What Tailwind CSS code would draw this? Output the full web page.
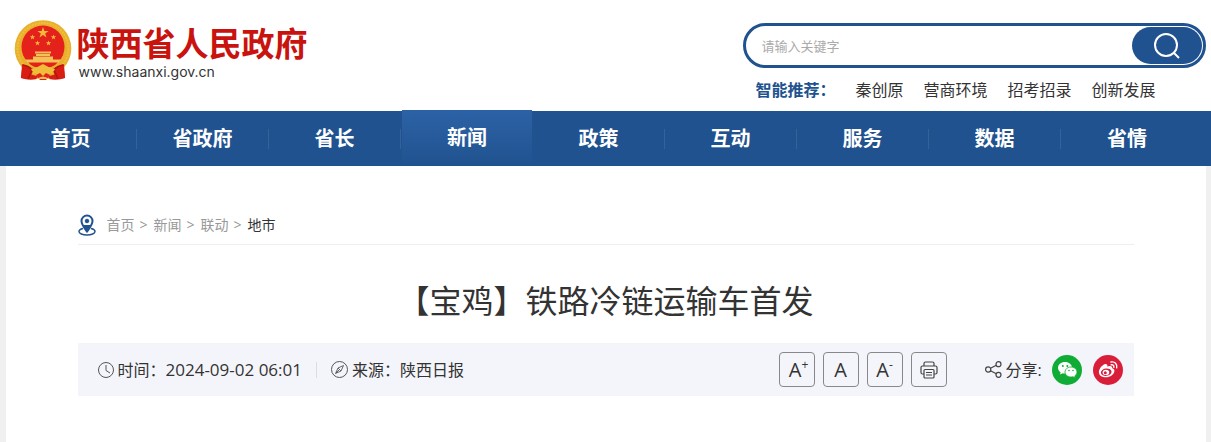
<!DOCTYPE html>
<html lang="zh-CN">
<head>
  <meta charset="UTF-8" />
  <meta name="viewport" content="width=device-width, initial-scale=1.0" />
  <title>【宝鸡】铁路冷链运输车首发</title>
  <script src="https://cdn.jsdelivr.net/npm/@tailwindcss/browser@4"></script>
</head>
<body class="min-h-screen flex flex-col bg-[#f0f0f0] text-[#333] font-['Open_Sans','Noto_Sans_CJK_SC',sans-serif]">
  <!-- Header -->
  <header class="bg-white">
    <div class="max-w-[1200px] mx-auto h-[111px] flex justify-between">
      <a href="#" class="flex items-start pl-2 pt-5">
        <svg class="w-[58px] h-[60px]" viewBox="0 0 58 60" aria-hidden="true">
          <path d="M9 42 L7 58 Q15 61 23 59 L29 56 L35 59 Q43 61 51 58 L49 42Z" fill="#d81e12" />
          <circle cx="29" cy="28.500" r="28.300" fill="#e8b02c" />
          <circle cx="29" cy="28.500" r="25.500" fill="none" stroke="#f0bf3e" stroke-width="2" stroke-dasharray="2 1" />
          <circle cx="29" cy="27" r="21.500" fill="#e4211a" />
          <path d="M29 7l1.400 4h4.200l-3.400 2.500 1.300 4.100-3.500-2.500-3.500 2.500 1.300-4.100-3.400-2.500h4.200z" fill="#f5b93a" />
          <path id="star" d="M18.500 14.500l.7 1.800h2l-1.600 1.200.6 1.900-1.700-1.100-1.700 1.100.6-1.900-1.600-1.200h2z" fill="#f5b93a" />
          <use href="#star" x="21" />
          <use href="#star" x="5" y="6" />
          <use href="#star" x="16" y="6" />
          <path d="M21 31.500h16v2H21zM22 34h14v2H22zM19 36.500h20v3H19zM11 39.500h36l-3 4H14z" fill="#f3c257" />
          <path d="M14 42.500h30l-6 4H20z" fill="#e4211a" />
          <path d="M8 44l12 5-5 10-8-1zM50 44l-12 5 5 10 8-1z" fill="#d91d12" />
          <path d="M9 45q6 1 9 5l-4 9M49 45q-6 1-9 5l4 9" fill="none" stroke="#b3150d" stroke-width="1.500" />
          <path d="M17 49q6-1 12-5 6 4 12 5-2 5-7 4l-2 2 4 4h-5l-2-2-2 2h-5l4-4-2-2q-5 1-7-4z" fill="#efbd3b" />
          <path d="M22 55l4-2 3 3 3-3 4 2-4 5h-6z" fill="#e4211a" />
          <path d="M23 59q6-5 12 0z" fill="#f3c257" />
        </svg>
        <span class="flex flex-col pl-[5px] pt-1">
          <span class="text-[33px] leading-[40px] font-bold text-[#c9130e]">陕西省人民政府</span>
          <span class="pl-0.5 text-[14px] leading-4 text-[#333] font-['Inter','Liberation_Sans',sans-serif]">www.shaanxi.gov.cn</span>
        </span>
      </a>

      <div class="w-[463px] pt-[23px]">
        <form class="h-[45px] flex items-center border-3 border-[#20528f] rounded-full overflow-hidden">
          <input type="text" placeholder="请输入关键字" aria-label="请输入关键字" class="flex-1 min-w-0 h-6 pl-4 text-[13px] outline-none placeholder:text-[#aaa]" />
          <button type="button" aria-label="搜索" class="w-[70px] h-[37px] mr-px flex items-center justify-center rounded-full bg-[#20528f] text-white">
            <svg class="w-7 h-7" viewBox="0 0 28 28" fill="none" stroke="currentColor" stroke-width="2">
              <circle cx="13" cy="13" r="11" />
              <path d="M21 21l5 5" />
            </svg>
          </button>
        </form>
        <div class="flex gap-5 pl-[13px] pt-2.5 text-base leading-6">
          <strong class="w-20 text-[#20528f]">智能推荐：</strong>
          <a href="#">秦创原</a>
          <a href="#">营商环境</a>
          <a href="#">招考招录</a>
          <a href="#">创新发展</a>
        </div>
      </div>
    </div>
  </header>

  <!-- Main nav -->
  <nav class="bg-[#20528f]">
    <div class="max-w-[1211px] mx-auto h-[55px] grid grid-cols-9 pl-[5px] pr-[18px] text-xl font-bold text-white text-center leading-[55px]">
      <a href="#" class="flex items-center justify-center after:ml-auto after:w-px after:h-5 after:bg-[#34639c] before:mr-auto">首页</a>
      <a href="#" class="flex items-center justify-center after:ml-auto after:w-px after:h-5 after:bg-[#34639c] before:mr-auto">省政府</a>
      <a href="#" class="flex items-center justify-center after:ml-auto after:w-px after:h-5 after:bg-[#34639c] before:mr-auto">省长</a>
      <a href="#" class="-mt-px mr-px ml-px bg-linear-to-b from-[#2c62a6] to-[#20528f]">新闻</a>
      <a href="#" class="flex items-center justify-center after:ml-auto after:w-px after:h-5 after:bg-[#34639c] before:mr-auto">政策</a>
      <a href="#" class="flex items-center justify-center after:ml-auto after:w-px after:h-5 after:bg-[#34639c] before:mr-auto">互动</a>
      <a href="#" class="flex items-center justify-center after:ml-auto after:w-px after:h-5 after:bg-[#34639c] before:mr-auto">服务</a>
      <a href="#" class="flex items-center justify-center after:ml-auto after:w-px after:h-5 after:bg-[#34639c] before:mr-auto">数据</a>
      <a href="#">省情</a>
    </div>
  </nav>

  <!-- Article -->
  <main class="flex-1 w-full max-w-[1200px] mx-auto px-[72px] pt-10 bg-white">
    <div class="h-[39px] flex items-center gap-[11px] border-b border-[#eee] text-sm text-[#999]">
      <svg class="w-[18px] h-[22px]" viewBox="0 0 18 22" fill="none" stroke="#20528f" aria-hidden="true">
        <path d="M5 14.500C2.500 15 1 16.200 1 17.500 1 19.500 4.500 21 9 21s8-1.500 8-3.500c0-1.300-1.500-2.500-4-3" stroke-width="1.500" />
        <path d="M9 17.500C6 13.500 3.500 10.500 3.500 7a5.500 5.500 0 0 1 11 0c0 3.500-2.500 6.500-5.500 10.500z" stroke-width="2" />
        <path d="M5.500 11.500h7L9 17z" fill="#20528f" />
        <circle cx="9" cy="7" r="1.800" fill="#20528f" />
      </svg>
      <div class="flex gap-[5px]">
        <a href="#">首页</a><span class="w-[9px]">&gt;</span>
        <a href="#">新闻</a><span class="w-[9px]">&gt;</span>
        <a href="#">联动</a><span class="w-[9px]">&gt;</span>
        <a href="#" class="text-[#333]">地市</a>
      </div>
    </div>

    <h1 class="pt-8 pb-[18px] text-[32px] leading-[48px] text-center">【宝鸡】铁路冷链运输车首发</h1>

    <div class="h-[53px] flex items-center justify-between pl-5 pr-[11px] bg-[#f4f5fb] text-base">
      <div class="flex items-center">
        <svg class="w-4 h-4 mr-1" viewBox="0 0 16 16" fill="none" stroke="#555" aria-hidden="true">
          <circle cx="8" cy="8" r="7.500" />
          <path d="M8 3v5.500l4 2.500" />
        </svg>
        <span>时间：</span>
        <time datetime="2024-09-02T06:01" class="text-[17px] leading-6">2024-09-02 06:01</time>
        <span class="w-px h-4 mx-3.5 bg-[#ddd]"></span>
        <svg class="w-[17px] h-[17px] mr-1" viewBox="0 0 17 17" fill="none" stroke="#555" aria-hidden="true">
          <circle cx="8.500" cy="8.500" r="8" />
          <path d="M12.500 4.500L7 7l-2.500 5.500L10 10zM7 7l3 3M5 12l3.500-3.500" stroke-width=".9" />
        </svg>
        <span>来源：陕西日报</span>
      </div>

      <div class="flex items-center">
        <div class="flex gap-2 text-[#333]">
          <button type="button" aria-label="放大字号" class="w-9 h-[35px] pl-1 flex items-center justify-center border border-[#888] rounded-sm">
            <span class="text-xl leading-6">A<sup class="static align-[8px] text-xs leading-none">+</sup></span>
          </button>
          <button type="button" aria-label="默认字号" class="w-9 h-[35px] flex items-center justify-center border border-[#888] rounded-sm">
            <span class="text-xl leading-6">A</span>
          </button>
          <button type="button" aria-label="缩小字号" class="w-9 h-[35px] flex items-center justify-center border border-[#888] rounded-sm">
            <span class="text-xl leading-6">A<sup class="static align-[8px] text-xs leading-none">-</sup></span>
          </button>
          <button type="button" aria-label="打印" class="w-9 h-[35px] flex items-center justify-center border border-[#888] rounded-sm">
            <svg class="w-[18px] h-[18px]" viewBox="0 0 18 18" fill="none" stroke="#444" stroke-width="1.200">
              <path d="M4 5V2.500q0-1.500 1.500-1.500h7Q14 1 14 2.500V5" />
              <path d="M4 13H2.500Q1 13 1 11.500v-5Q1 5 2.500 5h13Q17 5 17 6.500v5q0 1.500-1.500 1.500H14" />
              <rect x="4" y="8.500" width="10" height="8.500" rx="1" />
              <path d="M6 11.500h6M6 14h6" />
            </svg>
          </button>
        </div>
        <div class="flex items-center pl-[38px]">
          <svg class="w-[17px] h-[17px] mr-1" viewBox="0 0 17 17" fill="none" stroke="#444" stroke-width="1.200" aria-hidden="true">
            <circle cx="3.200" cy="8.500" r="2.600" />
            <circle cx="13.500" cy="3.200" r="2.500" />
            <circle cx="13.500" cy="13.800" r="2.500" />
            <path d="M5.500 7.300l5.800-3M5.500 9.700l5.800 3" />
          </svg>
          <span class="w-[46px]">分享:</span>
          <a href="#" aria-label="微信">
            <svg class="w-[30px] h-[30px]" viewBox="0 0 30 30">
              <circle cx="15" cy="15" r="15" fill="#11ac35" />
              <path d="M13 7c-4 0-7 2.600-7 5.800 0 1.900 1 3.500 2.600 4.500L8 19.500l2.600-1.300q1.100.3 2.400.3C17 18.500 20 16 20 12.800S17 7 13 7z" fill="#fff" />
              <path d="M19 12c3.400 0 6 2.200 6 5 0 1.600-.8 3-2.200 3.900l.5 2-2.300-1.200q-1 .3-2 .3c-3.400 0-6-2.200-6-5s2.600-5 6-5z" fill="#fff" stroke="#11ac35" stroke-width=".8" />
              <g fill="#11ac35">
                <circle cx="10.800" cy="11" r="1" />
                <circle cx="15.300" cy="11" r="1" />
                <circle cx="17" cy="15.500" r=".8" />
                <circle cx="21" cy="15.500" r=".8" />
              </g>
            </svg>
          </a>
          <a href="#" aria-label="微博" class="ml-[11px]">
            <svg class="w-[30px] h-[30px]" viewBox="0 0 30 30">
              <circle cx="15" cy="15" r="15" fill="#d91e3a" />
              <path d="M11.500 9.300c2-.8 3.300.2 2.800 2.200 2.600-1 5.200-.9 4.900 1.800 1.700.5 2.400 1.300 2.200 2.700-.3 3.500-4.200 6.300-8.500 6.300-4.100 0-7-2-7-5 0-3 2.600-6.700 5.600-8z" fill="#fff" />
              <ellipse cx="13.200" cy="17.200" rx="5.400" ry="3.700" fill="#d91e3a" transform="rotate(-8 13.200 17.200)" />
              <ellipse cx="12.900" cy="17.400" rx="3.300" ry="2.700" fill="#fff" />
              <circle cx="12.300" cy="17.800" r="1.500" fill="#d91e3a" />
              <path d="M18 7c3.700-.8 6.500 2 5.700 5.800M18.200 9.800c1.800-.3 3 .9 2.600 2.600" fill="none" stroke="#fff" stroke-width="1.400" stroke-linecap="round" />
            </svg>
          </a>
        </div>
      </div>
    </div>
  </main>
</body>
</html>
